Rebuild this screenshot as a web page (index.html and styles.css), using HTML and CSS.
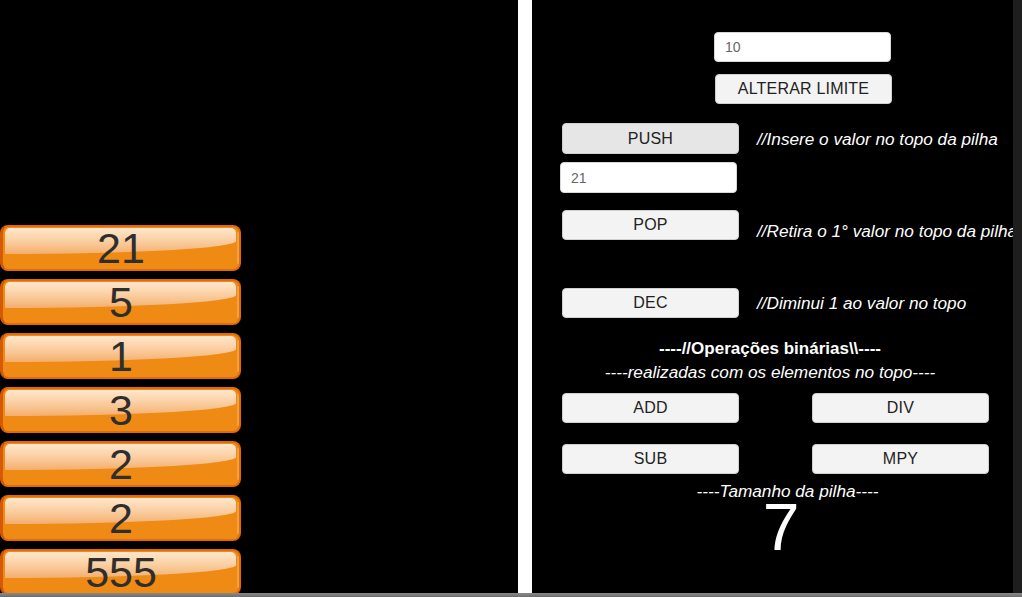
FILE: index.html
```html
<!DOCTYPE html>
<html lang="pt">
<head>
<meta charset="utf-8">
<title>Pilha</title>
<link rel="stylesheet" href="styles.css">
</head>
<body>
<div class="screen">
  <div class="app">
    <section class="stack-panel">
      <div class="block"><span class="num">21</span></div>
      <div class="block"><span class="num">5</span></div>
      <div class="block"><span class="num">1</span></div>
      <div class="block"><span class="num">3</span></div>
      <div class="block"><span class="num">2</span></div>
      <div class="block"><span class="num">2</span></div>
      <div class="block"><span class="num">555</span></div>
    </section>
    <div class="divider"></div>
    <section class="controls">
      <div class="limit-group">
        <input class="field" type="text" value="10">
        <button class="btn">ALTERAR LIMITE</button>
      </div>
      <div class="row row-push">
        <button class="btn btn-active">PUSH</button>
        <span class="comment">//Insere o valor no topo da pilha</span>
      </div>
      <input class="field field-push" type="text" value="21">
      <div class="row row-pop">
        <button class="btn">POP</button>
        <span class="comment comment-low">//Retira o 1° valor no topo da pilha</span>
      </div>
      <div class="row row-dec">
        <button class="btn">DEC</button>
        <span class="comment">//Diminui 1 ao valor no topo</span>
      </div>
      <div class="heading">----//Operações binárias\\----</div>
      <div class="subheading">----realizadas com os elementos no topo----</div>
      <div class="ops">
        <button class="btn">ADD</button>
        <button class="btn">DIV</button>
        <button class="btn">SUB</button>
        <button class="btn">MPY</button>
      </div>
      <div class="size-label">----Tamanho da pilha----</div>
      <div class="size-value">7</div>
    </section>
    <div class="scroll-strip"></div>
  </div>
  <div class="bottom-strip"></div>
</div>
</body>
</html>
```
FILE: styles.css
```css
html, body {
  margin: 0;
  padding: 0;
  background: #000;
  overflow: hidden;
}

.screen {
  width: 1022px;
  height: 597px;
  display: flex;
  flex-direction: column;
  font-family: "Liberation Sans", Arial, sans-serif;
}

.app {
  display: flex;
  height: 593px;
  overflow: hidden;
}

.bottom-strip {
  height: 4px;
  background: linear-gradient(#8a8a8a, #6e6e6e);
}

/* ---------- stack ---------- */
.stack-panel {
  width: 518px;
  flex: none;
  display: flex;
  flex-direction: column;
  gap: 8px;
  padding-top: 225px;
  box-sizing: border-box;
}

.block {
  position: relative;
  z-index: 0;
  width: 241px;
  height: 46px;
  flex: none;
  box-sizing: border-box;
  border: 2px solid #e36a08;
  border-left: 3px solid #d65a04;
  border-radius: 8px;
  background: #ef8a14;
  display: flex;
  align-items: center;
  justify-content: center;
  overflow: hidden;
}

.block::before {
  content: "";
  position: absolute;
  z-index: -1;
  left: 2px;
  right: 3px;
  top: 1px;
  height: 26px;
  border-radius: 5px 5px 0 0;
  border-bottom-right-radius: 100% 13px;
  background: linear-gradient(#fee6cc 0%, #fcd6ae 35%, #f8c28e 70%, #f4ae6c 100%);
}

.block::after {
  content: "";
  position: absolute;
  z-index: -1;
  right: 0;
  top: 5px;
  bottom: 5px;
  width: 2px;
  border-radius: 2px;
  background: #f7b56a;
  opacity: 0.55;
}

.num {
  color: #2e2e2e;
  font-size: 43px;
  line-height: 43px;
  white-space: nowrap;
}

.divider {
  width: 14px;
  flex: none;
  background: #fff;
}

/* ---------- controls ---------- */
.controls {
  width: 481px;
  flex: none;
  display: flex;
  flex-direction: column;
  padding-top: 32px;
  box-sizing: border-box;
  overflow: hidden;
  white-space: nowrap;
}

.scroll-strip {
  width: 9px;
  flex: none;
  background: #1e1e1e;
}

.field {
  box-sizing: border-box;
  flex: none;
  width: 177px;
  height: 30px;
  border: 1px solid #d8d8d8;
  border-radius: 4px;
  background: #fff;
  color: #666;
  font-family: "Liberation Sans", Arial, sans-serif;
  font-size: 14px;
  padding: 0 10px;
  margin: 0;
  outline: none;
}

.btn {
  box-sizing: border-box;
  flex: none;
  width: 177px;
  height: 30px;
  border: 1px solid #cfcfcf;
  border-radius: 4px;
  background: #f3f3f3;
  color: #222;
  font-family: "Liberation Sans", Arial, sans-serif;
  font-size: 16px;
  letter-spacing: 0.2px;
  padding: 0;
  margin: 0;
}

.btn-active {
  background: #e6e6e6;
  height: 31px;
}

.limit-group {
  display: flex;
  flex-direction: column;
  gap: 12px;
  margin-left: 182px;
}

.limit-group .btn {
  margin-left: 1px;
}

.row {
  display: flex;
  align-items: center;
  height: 30px;
  margin-left: 30px;
}

.comment {
  flex: none;
  margin-left: 18px;
  color: #fff;
  font-style: italic;
  font-size: 17.2px;
  line-height: 20px;
}

.comment-low {
  align-self: flex-start;
  margin-top: 11px;
}

.row-push {
  height: 31px;
  margin-top: 19px;
}

.field-push {
  margin-top: 8px;
  margin-left: 28px;
  height: 31px;
}

.row-pop {
  margin-top: 17px;
}

.row-dec {
  margin-top: 48px;
}

.heading {
  margin-top: 21px;
  padding-right: 5px;
  text-align: center;
  color: #fff;
  font-weight: bold;
  font-size: 17px;
  line-height: 20px;
}

.subheading {
  margin-top: 3px;
  padding-right: 5px;
  text-align: center;
  color: #fff;
  font-style: italic;
  font-size: 17.2px;
  line-height: 20px;
}

.ops {
  margin-top: 11px;
  margin-left: 30px;
  display: grid;
  grid-template-columns: 177px 177px;
  column-gap: 73px;
  row-gap: 21px;
}

.size-label {
  margin-top: 8px;
  padding-left: 30px;
  text-align: center;
  color: #fff;
  font-style: italic;
  font-size: 17.2px;
  line-height: 19px;
}

.size-value {
  padding-left: 17px;
  text-align: center;
  color: #fff;
  font-size: 66px;
  line-height: 52px;
}
```
